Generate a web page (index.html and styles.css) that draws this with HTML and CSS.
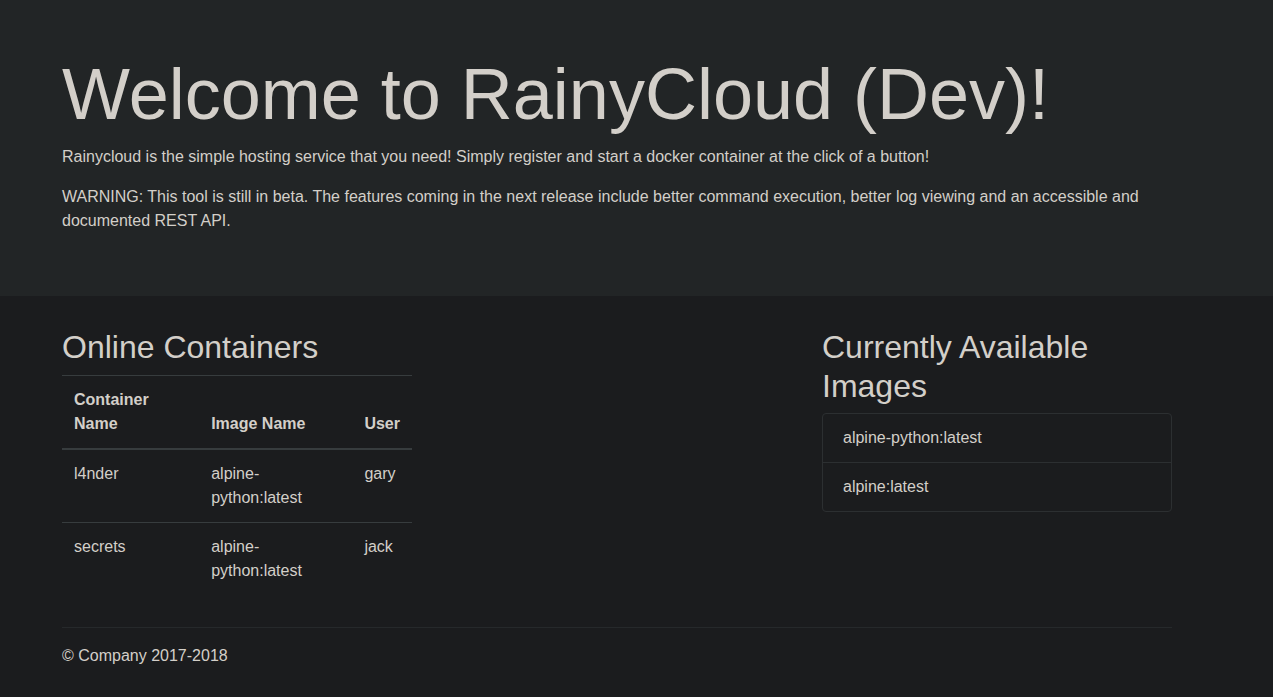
FILE: index.html
```html
<!DOCTYPE html>
<html lang="en">
<head>
<meta charset="utf-8">
<title>RainyCloud</title>
<link rel="stylesheet" href="styles.css">
</head>
<body>
<main>
  <div class="jumbotron">
    <div class="container">
      <h1 class="display">Welcome to RainyCloud (Dev)!</h1>
      <p>Rainycloud is the simple hosting service that you need! Simply register and start a docker container at the click of a button!</p>
      <p>WARNING: This tool is still in beta. The features coming in the next release include better command execution, better log viewing and an accessible and documented REST API.</p>
    </div>
  </div>
  <div class="container">
    <div class="row">
      <div class="col">
        <h2>Online Containers</h2>
        <table class="table">
          <thead>
            <tr><th>Container Name</th><th>Image Name</th><th>User</th></tr>
          </thead>
          <tbody>
            <tr><td>l4nder</td><td>alpine-python:latest</td><td>gary</td></tr>
            <tr><td>secrets</td><td>alpine-python:latest</td><td>jack</td></tr>
          </tbody>
        </table>
      </div>
      <div class="col"></div>
      <div class="col">
        <h2>Currently Available Images</h2>
        <ul class="list-group">
          <li class="list-group-item">alpine-python:latest</li>
          <li class="list-group-item">alpine:latest</li>
        </ul>
      </div>
    </div>
    <hr>
  </div>
</main>
<footer class="container">
  <p>© Company 2017-2018</p>
</footer>
</body>
</html>
```

FILE: styles.css
```css
* { box-sizing: border-box; }
html, body { margin: 0; padding: 0; }
body {
  background: #1b1c1e;
  color: #d3cfc9;
  font-family: "Liberation Sans", Arial, sans-serif;
  font-size: 16px;
  line-height: 24px;
}
.container {
  width: 1140px;
  margin-left: 47px;
  padding: 0 15px;
}
.jumbotron {
  background: #222526;
  padding: 51px 0 47px;
  margin-bottom: 32px;
}
.display {
  font-size: 72px;
  font-weight: 300;
  line-height: 1.2;
  margin: 0 0 8px;
}
p { margin: 0 0 16px; }
.row {
  display: flex;
  margin: 0 -15px;
}
.col {
  width: 380px;
  padding: 0 15px;
}
h2 {
  font-size: 32px;
  font-weight: 500;
  line-height: 1.2;
  margin: 0 0 8px;
}
.table {
  width: 100%;
  border-collapse: collapse;
  margin-bottom: 16px;
}
.table th, .table td {
  padding: 12px;
  text-align: left;
  vertical-align: top;
  border-top: 1px solid #373c3e;
}
.table thead th {
  vertical-align: bottom;
  font-weight: bold;
  border-bottom: 2px solid #373c3e;
}
.list-group {
  list-style: none;
  margin: 0;
  padding: 0;
  border: 1px solid #2c2f31;
  border-radius: 4px;
}
.list-group-item {
  padding: 12px 20px;
}
.list-group-item + .list-group-item {
  border-top: 1px solid #2c2f31;
}
hr {
  border: 0;
  border-top: 1px solid #26292b;
  margin: 16px 0;
}
```
